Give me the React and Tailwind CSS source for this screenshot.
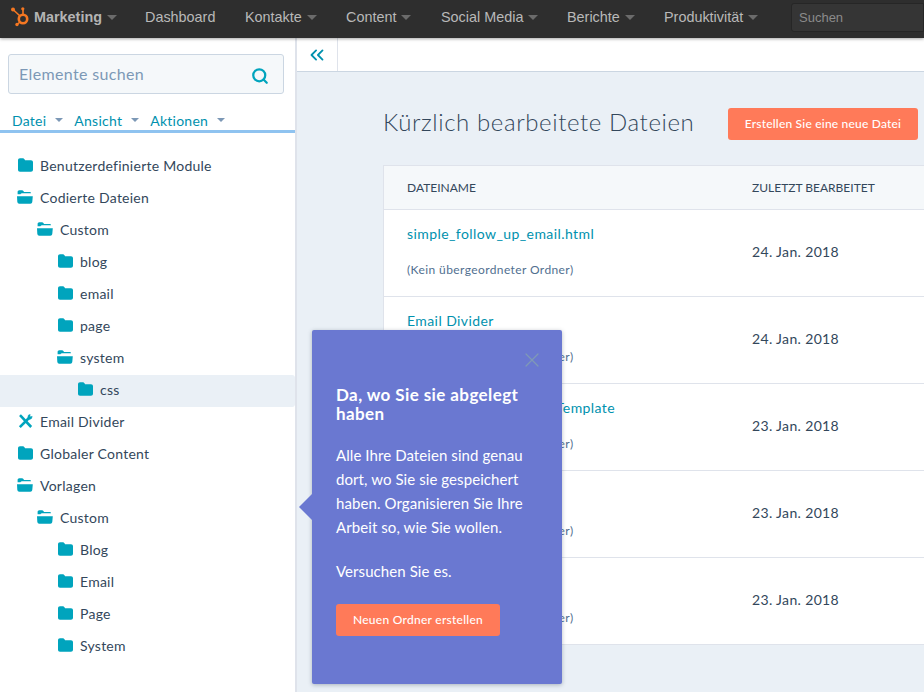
import React from 'react';
import { Search, ChevronsLeft, X } from 'lucide-react';

const FONT = "font-['Lato','Noto_Sans',sans-serif]";

const Caret = ({ className = 'border-x-[5px] border-t-[5px] border-t-[#6b6b6b]' }) => (
    <span className={`inline-block w-0 h-0 border-x-transparent ${className}`} />
);

const HubLogo = () => (
    <svg width="20" height="22" viewBox="0 0 20 22" fill="none">
        <circle cx="12" cy="12" r="4.2" stroke="#f57722" strokeWidth="2.6" />
        <path d="M12 2v6M2 2.500l7 6.500M9 15l-3 2.500" stroke="#f57722" strokeWidth="1.6" />
        <circle cx="11.800" cy="1.800" r="1.600" fill="#f57722" />
        <circle cx="2" cy="2.500" r="2" fill="#f57722" />
        <circle cx="6" cy="17.500" r="1.700" fill="#f57722" />
    </svg>
);

const ClosedFolder = () => (
    <svg width="15" height="14" viewBox="0 0 15 14" fill="#00a4bd">
        <path d="M0 2.2C0 1 .8.2 2 .2h2.6c.9 0 1.4.4 1.9 1.1l.6.9H13c1.200 0 2 .8 2 2v7.600c0 1.200-.8 2-2 2H2c-1.200 0-2-.8-2-2z" />
    </svg>
);

const OpenFolder = () => (
    <svg width="16" height="14" viewBox="0 0 16 14" fill="#00a4bd">
        <path d="M.6 4.300V2C.6 1 1.300.3 2.300.3h2.600c.8 0 1.300.3 1.700 1l.4.7h5.500c.9 0 1.500.5 1.500 1.300H5.500C4.500 3.300 4 3.600 3.400 4.300z" />
        <path d="M0 6.300h15.800l-.5 5.500c-.1 1.200-.9 1.900-2 1.900H2.300c-1.100 0-1.800-.7-2-1.900z" />
    </svg>
);

const ToolIcon = () => (
    <svg width="15" height="15" viewBox="0 0 15 15" fill="none" stroke="#00a4bd">
        <path d="M1.800 13.200 11.500 3.500" strokeWidth="2.600" />
        <path d="M2 1.200 13.200 13" strokeWidth="2.600" />
        <path d="M9.800 3.200 10.500 1l1.700-.6-.4 2.400 2.400-.4-.6 2-2 1.200z" fill="#00a4bd" strokeWidth="0.500" />
    </svg>
);

const tree = [
    { name: 'Benutzerdefinierte Module', depth: 0, icon: 'closed' },
    { name: 'Codierte Dateien', depth: 0, icon: 'open' },
    { name: 'Custom', depth: 1, icon: 'open' },
    { name: 'blog', depth: 2, icon: 'closed' },
    { name: 'email', depth: 2, icon: 'closed' },
    { name: 'page', depth: 2, icon: 'closed' },
    { name: 'system', depth: 2, icon: 'open' },
    { name: 'css', depth: 3, icon: 'closed', active: true },
    { name: 'Email Divider', depth: 0, icon: 'tool' },
    { name: 'Globaler Content', depth: 0, icon: 'closed' },
    { name: 'Vorlagen', depth: 0, icon: 'open' },
    { name: 'Custom', depth: 1, icon: 'open' },
    { name: 'Blog', depth: 2, icon: 'closed' },
    { name: 'Email', depth: 2, icon: 'closed' },
    { name: 'Page', depth: 2, icon: 'closed' },
    { name: 'System', depth: 2, icon: 'closed' },
];

const depthPad = ['pl-[17px]', 'pl-[37px]', 'pl-[57px]', 'pl-[77px]'];

const files = [
    { name: 'simple_follow_up_email.html', date: '24. Jan. 2018', sub: '(Kein übergeordneter Ordner)' },
    { name: 'Email Divider', date: '24. Jan. 2018', sub: '(Kein übergeordneter Ordner)' },
    { name: 'Simple Follow Up Mail Template', date: '23. Jan. 2018', sub: '(Kein übergeordneter Ordner)' },
    { name: 'simple_template', date: '23. Jan. 2018', sub: '(Kein übergeordneter Ordner)' },
    { name: 'simple_page', date: '23. Jan. 2018', sub: '(Kein übergeordneter Ordner)' },
];

const NavItem = ({ label, caret = true, className = '' }) => (
    <div className={`flex items-center gap-[5px] pb-[3px] ${className}`}>
        <span>{label}</span>
        {caret && <Caret />}
    </div>
);

const TopNav = () => (
    <div className="h-[38px] shrink-0 bg-[#2e2e2e] flex items-center text-[#b9b9b9] text-[14.4px] font-['Liberation_Sans',sans-serif] shadow-[0_1px_3px_rgba(0,0,0,0.35)] relative z-10">
        <div className="pl-[11px] pr-[3px] pb-[2px] flex items-center">
            <HubLogo />
        </div>
        <NavItem label={<span className="font-bold">Marketing</span>} className="w-[111px] text-[#b4b4b4]" />
        <NavItem label="Dashboard" caret={false} className="w-[100px]" />
        <NavItem label="Kontakte" className="w-[101px]" />
        <NavItem label="Content" className="w-[95px]" />
        <NavItem label="Social Media" className="w-[126px]" />
        <NavItem label="Berichte" className="w-[97px]" />
        <NavItem label="Produktivität" className="w-[127px]" />
        <div className="h-[29px] flex-1 bg-[#353535] border border-[#262626] rounded-l-[3px] flex items-center pl-[7px] text-[13px] text-[#8b8b8b] mb-[3px]">
            Suchen
        </div>
    </div>
);

const Sidebar = () => (
    <div className={`w-[297px] shrink-0 bg-white border-r-2 border-[#dfe3eb] flex flex-col ${FONT}`}>
        <div className="pl-2 pt-4">
            <div className="w-[276px] h-10 bg-[#f5f8fa] border border-[#cbd6e2] rounded-[3px] flex items-center justify-between pl-[10px] pr-[14px]">
                <span className="text-[16px] text-[#7c98b6] tracking-[0.35px]">Elemente suchen</span>
                <Search size={18} strokeWidth={3} className="text-[#00a4bd] mt-[3px]" />
            </div>
        </div>
        <div className="h-[20px] mt-[16px] pl-3 flex items-center text-[14px] text-[#0091ae] tracking-[0.25px]">
            <span>Datei</span>
            <Caret className="border-x-[4px] border-t-[4px] border-t-[#7c98b6] ml-[9px] mr-[11px]" />
            <span>Ansicht</span>
            <Caret className="border-x-[4px] border-t-[4px] border-t-[#7c98b6] ml-[9px] mr-[11px]" />
            <span>Aktionen</span>
            <Caret className="border-x-[4px] border-t-[4px] border-t-[#7c98b6] ml-[9px]" />
        </div>
        <div className="h-[3px] bg-[#8fc3f0] shrink-0" />
        <div className="pt-[18px] flex flex-col">
            {tree.map((item, i) => (
                <div
                    key={i}
                    className={`h-8 flex items-center gap-[7px] pb-[4px] text-[14px] text-[#33475b] tracking-[0.25px] rounded-r-[3px] ${depthPad[item.depth]} ${item.active ? 'bg-[#eaf0f6]' : ''}`}
                >
                    <span className="w-[16px] flex justify-center">
                        {item.icon === 'closed' && <ClosedFolder />}
                        {item.icon === 'open' && <OpenFolder />}
                        {item.icon === 'tool' && <ToolIcon />}
                    </span>
                    <span>{item.name}</span>
                </div>
            ))}
        </div>
    </div>
);

const FileTable = () => (
    <div className="w-[560px] bg-white border border-b-0 border-[#dfe3eb] mt-[25px] shrink-0">
        <div className="h-[44px] pt-[1px] bg-[#f5f8fa] border-b border-[#dfe3eb] flex items-center text-[12px] text-[#33475b]">
            <div className="w-[368px] pl-[23px]">DATEINAME</div>
            <div>ZULETZT BEARBEITET</div>
        </div>
        {files.map((f, i) => (
            <div key={i} className="h-[87px] border-b border-[#dfe3eb] flex">
                <div className="w-[368px] pl-[23px] pt-[14px]">
                    <div className="text-[14px] text-[#0091ae] tracking-[0.42px] leading-[20px] mb-[17px]">{f.name}</div>
                    <div className="text-[12px] text-[#516f90] tracking-[0.4px] leading-[18px]">{f.sub}</div>
                </div>
                <div className="flex items-center pb-[3px] text-[14px] text-[#33475b] tracking-[0.35px]">{f.date}</div>
            </div>
        ))}
    </div>
);

const Popover = () => (
    <div className={`absolute left-[312px] top-[330px] w-[250px] h-[354px] bg-[#6a78d1] rounded-[2px] shadow-[0_1px_4px_rgba(45,62,80,0.35)] pl-6 pr-4 pt-[55px] text-white z-20 ${FONT}`}>
        <div className="absolute left-[-13px] top-[164px] w-0 h-0 border-y-[13px] border-y-transparent border-r-[13px] border-r-[#6a78d1]" />
        <X size={24} strokeWidth={1.200} className="absolute right-[18px] top-[18px] text-[#7f9ab5]" />
        <h4 className="text-[17px] font-bold leading-[19px] tracking-[0.4px]">Da, wo Sie sie abgelegt haben</h4>
        <p className="mt-[20px] text-[15px] leading-[24px] tracking-[0.08px]">
            Alle Ihre Dateien sind genau dort, wo Sie sie gespeichert haben. Organisieren Sie Ihre Arbeit so, wie Sie wollen.
        </p>
        <p className="mt-[20px] text-[15px] leading-[24px] tracking-[0.08px]">Versuchen Sie es.</p>
        <button className="mt-[21px] w-[164px] h-8 bg-[#ff7a59] rounded-[3px] text-[12px] font-medium tracking-[0.27px] text-white">
            Neuen Ordner erstellen
        </button>
    </div>
);

const App = () => {
    return (
        <div className="relative w-[924px] h-[692px] overflow-hidden flex flex-col bg-[#eaf0f6]">
            <TopNav />
            <div className="flex flex-1 min-h-0">
                <Sidebar />
                <div className={`flex-1 min-w-0 flex flex-col overflow-hidden ${FONT}`}>
                    <div className="h-[34px] shrink-0 bg-white border-b border-[#cbd6e2] flex">
                        <div className="w-[41px] border-r border-[#dfe3eb] flex items-center justify-center">
                            <ChevronsLeft size={22} strokeWidth={2} className="text-[#0091ae]" />
                        </div>
                    </div>
                    <div className="pl-[86px] pt-[36px] flex flex-col flex-1">
                        <div className="h-8 flex items-center">
                            <h1 className="w-[345px] pb-[4px] text-[24px] font-light text-[#33475b] tracking-[0.6px]">Kürzlich bearbeitete Dateien</h1>
                            <button className="w-[190px] h-8 bg-[#ff7a59] rounded-[3px] text-[12px] font-medium tracking-[0.2px] text-white">
                                Erstellen Sie eine neue Datei
                            </button>
                        </div>
                        <FileTable />
                    </div>
                </div>
            </div>
            <Popover />
        </div>
    );
};

export default App;
